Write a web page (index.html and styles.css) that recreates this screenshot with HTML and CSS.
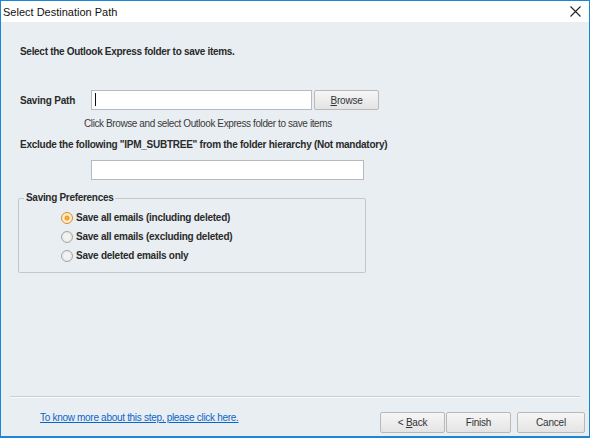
FILE: index.html
```html
<!DOCTYPE html>
<html lang="en">
<head>
    <meta charset="UTF-8">
    <title>Select Destination Path</title>
    <link rel="stylesheet" href="styles.css">
</head>
<body>
    <div class="window">
        <div class="titlebar">
            <span class="title">Select Destination Path</span>
            <span class="close">
                <svg width="11" height="11" viewBox="0 0 11 11">
                    <path d="M0.5 0.5 L10.5 10.5 M10.5 0.5 L0.5 10.5" stroke="#222" stroke-width="1.1" fill="none"/>
                </svg>
            </span>
        </div>

        <div class="content">
            <p class="heading">Select the Outlook Express folder to save items.</p>

            <div class="path-row">
                <span class="field-label">Saving Path</span>
                <div class="textbox path-box"><span class="caret"></span></div>
                <button class="btn browse-btn"><u>B</u>rowse</button>
            </div>
            <p class="hint">Click Browse and select Outlook Express folder to save items</p>

            <p class="heading exclude">Exclude the following "IPM_SUBTREE" from the folder hierarchy (Not mandatory)</p>
            <div class="textbox exclude-box"></div>

            <fieldset class="prefs">
                <legend>Saving Preferences</legend>
                <label class="radio-row"><span class="radio checked"></span>Save all emails (including deleted)</label>
                <label class="radio-row"><span class="radio"></span>Save all emails (excluding deleted)</label>
                <label class="radio-row"><span class="radio"></span>Save deleted emails only</label>
            </fieldset>
        </div>

        <div class="footer">
            <div class="separator"></div>
            <div class="footer-row">
                <a href="#" class="help-link">To know more about this step, please click here.</a>
                <div class="buttons">
                    <button class="btn nav-btn">&lt; <u>B</u>ack</button>
                    <button class="btn nav-btn">Finish</button>
                    <button class="btn nav-btn cancel-btn">Cancel</button>
                </div>
            </div>
        </div>
    </div>
</body>
</html>
```

FILE: styles.css
```css
* {
    margin: 0;
    padding: 0;
    box-sizing: border-box;
}

body {
    width: 590px;
    height: 438px;
    overflow: hidden;
    font-family: 'Liberation Sans', Arial, sans-serif;
    font-size: 10px;
    color: #1e1e1e;
}

.window {
    width: 590px;
    height: 438px;
    border: 1px solid #1b87d4;
    border-bottom-width: 2px;
    background: #e9eef2;
    display: flex;
    flex-direction: column;
}

.titlebar {
    height: 21px;
    background: white;
    display: flex;
    align-items: center;
    justify-content: space-between;
    padding: 0 8px 0 2px;
}

.title {
    font-size: 11px;
    color: #111;
}

.close {
    display: flex;
}

.content {
    flex: 1;
    padding: 23px 0 0 19px;
}

.heading {
    font-weight: bold;
    font-size: 10px;
    line-height: 14px;
    letter-spacing: -0.3px;
    color: #2a2a2a;
}

.path-row {
    display: flex;
    align-items: center;
    margin-top: 31px;
    height: 20px;
}

.field-label {
    width: 71px;
    font-weight: bold;
    letter-spacing: -0.2px;
    color: #2a2a2a;
}

.textbox {
    height: 20px;
    background: white;
    border: 1px solid #b4bac0;
    position: relative;
}

.path-box {
    width: 221px;
}

.caret {
    position: absolute;
    left: 3px;
    top: 2px;
    width: 1px;
    height: 13px;
    background: #111;
}

.btn {
    font-family: 'Liberation Sans', Arial, sans-serif;
    font-size: 10px;
    color: #333;
    height: 21px;
    background: linear-gradient(#f6f6f6, #e4e4e4);
    border: 1px solid #b9b9b9;
    border-radius: 2px;
    letter-spacing: -0.2px;
}

.btn u {
    text-decoration: underline;
}

.browse-btn {
    width: 65px;
    height: 20px;
    margin-left: 2px;
}

.hint {
    margin: 7px 0 0 64px;
    line-height: 14px;
    letter-spacing: -0.4px;
    color: #3a3a3a;
}

.exclude {
    margin-top: 7px;
    letter-spacing: -0.26px;
}

.exclude-box {
    width: 273px;
    margin: 8px 0 0 71px;
}

.prefs {
    width: 348px;
    margin: 11px 0 0 -2px;
    border: 1px solid #c3c8cd;
    border-radius: 2px;
    padding: 3px 0 7px 42px;
}

.prefs legend {
    font-weight: bold;
    color: #2a2a2a;
    line-height: 14px;
    letter-spacing: -0.3px;
    padding: 0 2px;
    margin-left: -37px;
}

.radio-row {
    display: flex;
    align-items: center;
    height: 19px;
    font-weight: bold;
    letter-spacing: -0.25px;
    color: #2a2a2a;
}

.radio {
    width: 12px;
    height: 12px;
    border-radius: 50%;
    border: 1px solid #a6a6a6;
    background: radial-gradient(circle, #f2f2f2 40%, #dcdcdc 100%);
    margin-right: 3px;
}

.radio.checked {
    border-color: #d98a2b;
    background: radial-gradient(circle, #f7b53a 0, #ef9b20 30%, #fbe7c6 40%, #fff4e2 100%);
}

.footer {
    height: 40px;
}

.separator {
    height: 2px;
    margin: 0 9px;
    border-top: 1px solid #c9ced3;
    border-bottom: 1px solid #f7f9fb;
}

.footer-row {
    display: flex;
    justify-content: space-between;
    align-items: flex-start;
    padding: 14px 4px 0 39px;
}

.help-link {
    color: #0a66c8;
    text-decoration: underline;
    letter-spacing: -0.3px;
}

.buttons {
    display: flex;
}

.nav-btn {
    width: 65px;
    margin-left: 1px;
}

.cancel-btn {
    width: 68px;
    margin-left: 6px;
}
```
